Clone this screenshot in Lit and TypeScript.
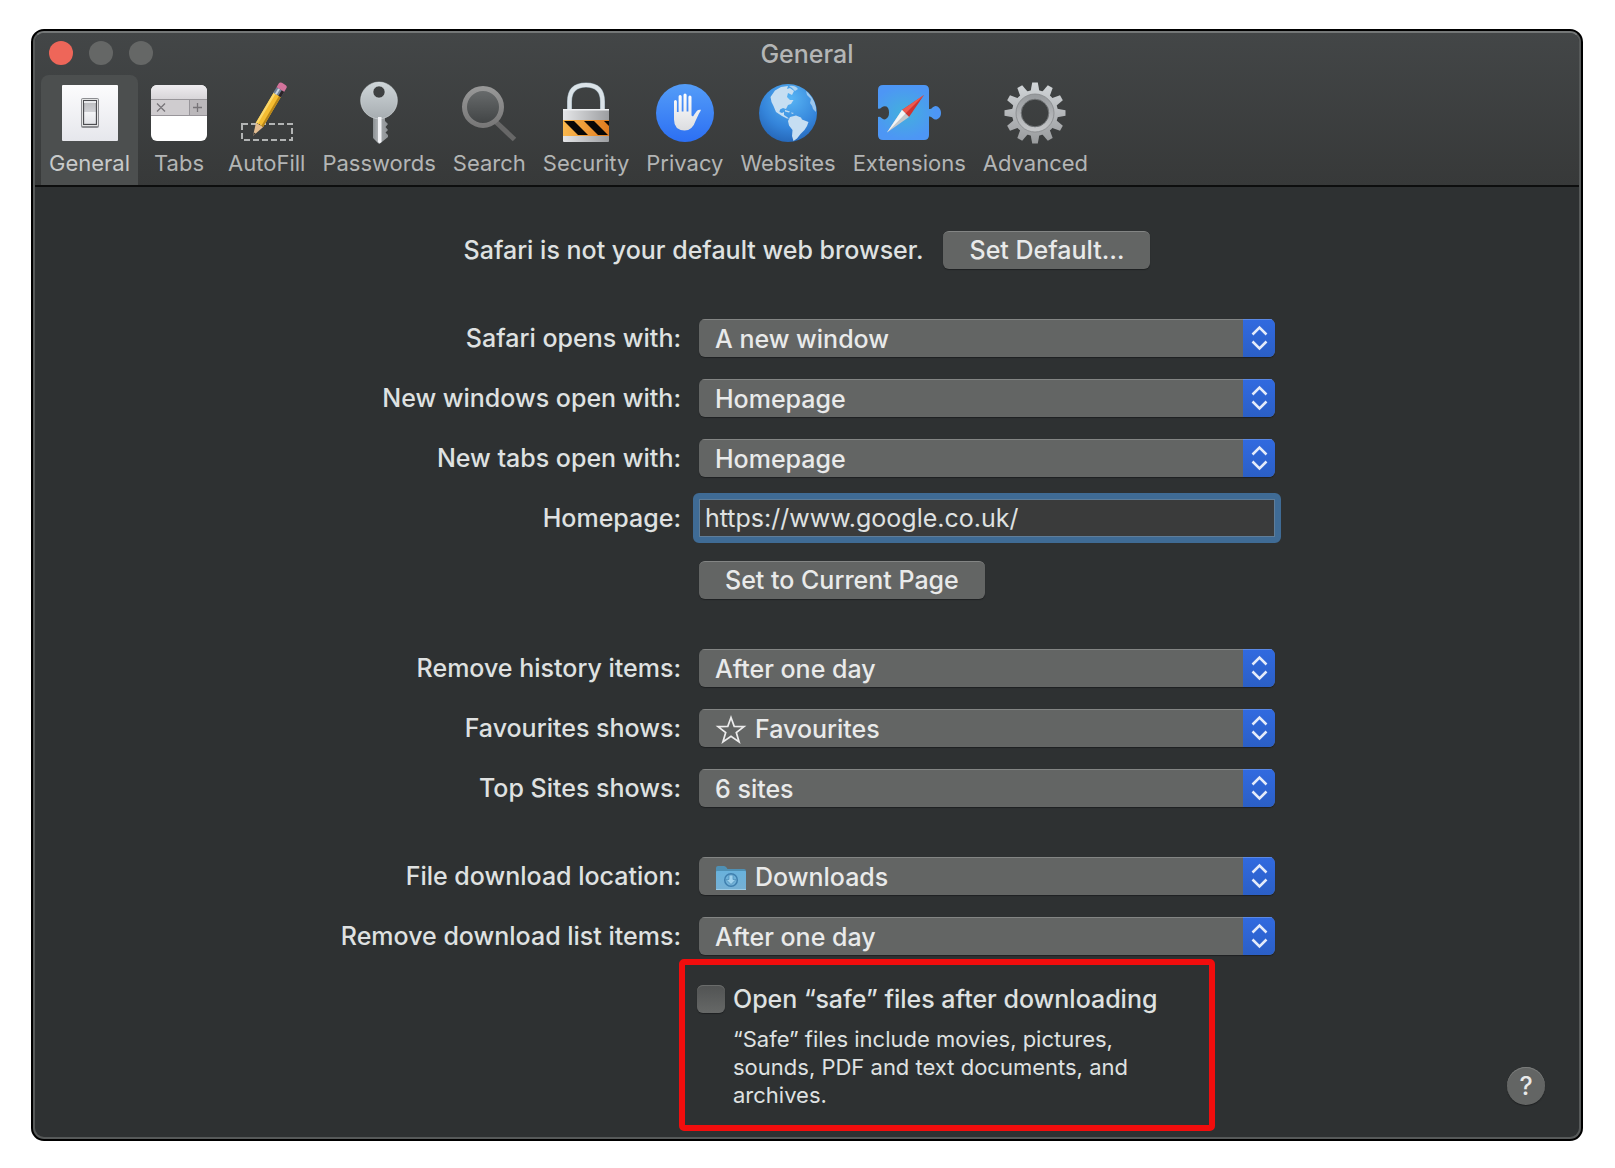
import { LitElement, html, svg, css, nothing } from "lit";
import { customElement, property, state } from "lit/decorators.js";
import { classMap } from "lit/directives/class-map.js";

const generalIcon = svg`
  <defs>
    <linearGradient id="plate" x1="0" y1="0" x2="0" y2="1"><stop offset="0" stop-color="#fcfcfd"/><stop offset="1" stop-color="#e6e7ec"/></linearGradient>
    <linearGradient id="rocker" x1="0" y1="0" x2="0" y2="1"><stop offset="0" stop-color="#b9babd"/><stop offset="0.46" stop-color="#cfd0d4"/><stop offset="0.5" stop-color="#f4f5f7"/><stop offset="1" stop-color="#e2e3e7"/></linearGradient>
  </defs>
  <rect x="4" y="4" width="56" height="56" rx="1" fill="url(#plate)"/>
  <rect x="23" y="17" width="18" height="30" rx="2" fill="#8d8e92"/>
  <rect x="24" y="18" width="16" height="27" rx="1" fill="#fff"/>
  <rect x="25.500" y="19.500" width="13" height="24" fill="url(#rocker)" stroke="#4c4d51" stroke-width="1.3"/>
  <rect x="26" y="20" width="12" height="2" fill="#e8e9ec"/>`;

const tabsIcon = svg`
  <defs>
    <linearGradient id="tabtop" x1="0" y1="0" x2="0" y2="1"><stop offset="0" stop-color="#eeecef"/><stop offset="1" stop-color="#d8d5d9"/></linearGradient>
    <clipPath id="tabclip"><rect x="4" y="4" width="56" height="56" rx="6"/></clipPath>
  </defs>
  <g clip-path="url(#tabclip)">
    <rect x="4" y="4" width="56" height="56" fill="#fff"/>
    <rect x="4" y="4" width="56" height="14" fill="url(#tabtop)"/>
    <rect x="4" y="18" width="56" height="17" fill="#cfcccf"/>
    <rect x="42" y="18" width="18" height="17" fill="#bbb8bb"/>
    <path d="M4 18.500H60M4 34.500H60M42.500 18V35" stroke="#98959a" fill="none"/>
    <path d="M10 22.500l8 8M18 22.500l-8 8M46 26.500h9M50.500 22v9" stroke="#777478" stroke-width="1.300" fill="none"/>
  </g>`;

const autofillIcon = svg`
  <rect x="7" y="43" width="50" height="16" fill="none" stroke="#b2b4b4" stroke-width="2" stroke-dasharray="6 3"/>
  <g transform="translate(18 55) rotate(30.500)">
    <path d="M0 0L-4.200-13H4.200Z" fill="#e3bd91"/>
    <path d="M0 0L-1-3.500H1Z" fill="#403c38"/>
    <path d="M-4.200-12.500V-48H4.200V-12.500Q3-15 1.500-12.500Q0-15-1.500-12.500Q-3-15-4.200-12.500Z" fill="#f5bd32"/>
    <path d="M-4.200-12.500V-48H-2V-13.500Z" fill="#fbd86b"/>
    <path d="M2-13.500V-48H4.200V-12.500Z" fill="#b98618"/>
    <rect x="-4.500" y="-54" width="9" height="6.500" fill="#6f7f96"/>
    <rect x="-2.500" y="-54" width="2" height="6.500" fill="#c7d3e0"/>
    <rect x="1.500" y="-54" width="3" height="6.500" fill="#2c2428"/>
    <path d="M-4.500-54V-58Q-4.500-60.500-2-60.500H2Q4.500-60.500 4.500-58V-54Z" fill="#d3739b"/>
  </g>`;

const passwordsIcon = svg`
  <defs>
    <linearGradient id="keyhead" x1="0" y1="0" x2="0" y2="1"><stop offset="0" stop-color="#cfd6d9"/><stop offset="1" stop-color="#a7adb1"/></linearGradient>
    <linearGradient id="keyblade" x1="0" y1="0" x2="1" y2="0"><stop offset="0" stop-color="#8b9093"/><stop offset="0.300" stop-color="#aaaeb1"/><stop offset="1" stop-color="#8d9194"/></linearGradient>
  </defs>
  <path d="M26 34H38V40L41 43L38.500 46L41 49L38.500 51.500L41 54V56L33 62.500H31.500L26 57Z" fill="url(#keyblade)"/>
  <path fill-rule="evenodd" d="M32 1A18.400 18.400 0 1 1 32 37.800A18.400 18.400 0 1 1 32 1ZM32 5A6 6 0 1 0 32 17A6 6 0 1 0 32 5Z" fill="url(#keyhead)" stroke="#dfe4e6" stroke-width="0.500"/>
  <path d="M31 36H34.500V61L32.500 62.500L31 61Z" fill="#f2f3f6"/>`;

const searchIcon = svg`
  <defs>
    <linearGradient id="lens" x1="0" y1="0" x2="0" y2="1"><stop offset="0" stop-color="#6a6d6e"/><stop offset="1" stop-color="#3f4243"/></linearGradient>
    <linearGradient id="rim" x1="0" y1="0" x2="0" y2="1"><stop offset="0" stop-color="#979797"/><stop offset="1" stop-color="#787878"/></linearGradient>
  </defs>
  <path d="M39 41L57.500 58.500" stroke="#676767" stroke-width="5" fill="none"/>
  <circle cx="26" cy="26" r="18.500" fill="url(#lens)" stroke="url(#rim)" stroke-width="5"/>`;

const securityIcon = svg`
  <defs>
    <linearGradient id="lockbody" x1="0" y1="0" x2="1" y2="0"><stop offset="0" stop-color="#e5e6e8"/><stop offset="1" stop-color="#9c9ea1"/></linearGradient>
    <linearGradient id="band" x1="0" y1="0" x2="1" y2="0"><stop offset="0" stop-color="#f9b84e"/><stop offset="1" stop-color="#e07c20"/></linearGradient>
    <clipPath id="bandclip"><rect x="9" y="40" width="46" height="14"/></clipPath>
  </defs>
  <path d="M15.500 30V20.500Q15.500 4 32 4Q48.500 4 48.500 20.500V30" fill="none" stroke="#8fa0aa" stroke-width="5"/>
  <path d="M15.500 30V20.500Q15.500 4 32 4Q48.500 4 48.500 20.500V30" fill="none" stroke="#dbe3e8" stroke-width="4"/>
  <rect x="9" y="28" width="46" height="33" rx="1" fill="url(#lockbody)"/>
  <rect x="9" y="28" width="46" height="1.500" fill="#eef0f2"/>
  <rect x="9" y="39" width="46" height="16" fill="url(#band)"/>
  <g clip-path="url(#bandclip)" fill="#080706">
    <path d="M9 39H19L35 55H25Z"/><path d="M29 39H39L55 55H45Z"/><path d="M49 39H55V45Z"/>
  </g>`;

const privacyIcon = svg`
  <defs>
    <linearGradient id="disc" x1="0" y1="0" x2="0" y2="1"><stop offset="0" stop-color="#549df8"/><stop offset="1" stop-color="#2c6ff3"/></linearGradient>
    <linearGradient id="palm" x1="0" y1="0" x2="0" y2="1"><stop offset="0" stop-color="#fff"/><stop offset="1" stop-color="#dcdde0"/></linearGradient>
  </defs>
  <circle cx="32" cy="32" r="29" fill="url(#disc)"/>
  <path d="M21 20.500Q21 19 22.400 19Q23.900 19 23.900 20.500V31H25.600V15.500Q25.600 14 27.100 14Q28.700 14 28.700 15.500V30.500H30.500V14Q30.500 12.500 32 12.500Q33.600 12.500 33.600 14V30.500H35.400V16Q35.400 14.500 36.900 14.500Q38.500 14.500 38.500 16V34.500L40 35.500Q42 32.500 44 29.800Q45.500 28.300 48 28.800Q47.500 30.500 46 32.500L42.500 40Q39.500 49.500 31.500 49.500Q21 49 21 38.500Z" fill="url(#palm)"/>`;

const websitesIcon = svg`
  <defs>
    <radialGradient id="sea" cx="0.550" cy="0.250" r="0.850"><stop offset="0" stop-color="#58b4f4"/><stop offset="0.600" stop-color="#3484da"/><stop offset="1" stop-color="#215eae"/></radialGradient>
    <clipPath id="globeclip"><circle cx="32" cy="32" r="29"/></clipPath>
  </defs>
  <circle cx="32" cy="32" r="29" fill="url(#sea)"/>
  <g clip-path="url(#globeclip)" fill="#c6def2">
    <path d="M14.500 16L19 9.500L25 6L32 5L31 8L34 7L38 10L36 14L32 12L31 16L34 19L37.500 19L35 23L32 24L30 28L27 27L24 28.500L23.500 31L26 32L28 31V34L31 36L33 37.500L31 37.500L26 35L20 31L17.500 25L15.500 21Z"/>
    <path d="M33 5Q39 4 42 8L39 10L36 7Z" opacity="0.800"/>
    <path d="M29 29L34 30.500L33 31.500L29 30.500ZM35 31.500L38 32L36 33Z"/>
    <path d="M34 36L40 34.500L45 36.500L46 38.500L52.500 41L51 45L48.500 49L44.500 53L41 57.500L37.500 60L36 55L36.500 49L33 44.500L32 40Z"/>
    <path d="M50 10Q54 13 58 20Q61 27 60 31L57 28Q56 24 54 22L55 18L51 14Z" opacity="0.700"/>
  </g>`;

const extensionsIcon = svg`
  <defs>
    <radialGradient id="puzzle" cx="0.420" cy="0.500" r="0.550"><stop offset="0" stop-color="#43b0dc"/><stop offset="0.900" stop-color="#4d96f5"/></radialGradient>
  </defs>
  <path d="M6 4H47Q52 4 52 9V28Q54 28.500 55.500 26.500Q58 24 60.500 25.500Q64 27.500 64 32Q64 36.500 60.500 38Q58 39.500 55.500 37Q54 35 52 35.500V54Q52 59 47 59H6Q1 59 1 54V36Q2.500 35 4.500 37Q7 39.500 9.500 37.500Q12 36 12 31.500Q12 27 9.500 25.500Q7 24.500 4.500 26.500Q2.500 28.500 1 27.500V9Q1 4 6 4Z" fill="url(#puzzle)"/>
  <path d="M47 14L25 29L32 36Z" fill="#cf3430"/>
  <path d="M47 14L25 29L28.500 32.500Z" fill="#ee5a50"/>
  <path d="M10 51.500L25 29L32 36Z" fill="#c5c8cb"/>
  <path d="M10 51.500L25 29L28.500 32.500Z" fill="#f4f5f6"/>`;

const teeth = Array.from({ length: 12 }, (_, i) => i * 30);
const advancedIcon = svg`
  <defs>
    <linearGradient id="gear" gradientUnits="userSpaceOnUse" x1="0" y1="-31" x2="0" y2="31"><stop offset="0" stop-color="#d3d7da"/><stop offset="1" stop-color="#989a9c"/></linearGradient>
    <linearGradient id="gearring" x1="0" y1="0" x2="0" y2="1"><stop offset="0" stop-color="#999c9f"/><stop offset="1" stop-color="#c3c5c7"/></linearGradient>
    <mask id="gearmask" maskUnits="userSpaceOnUse" x="-32" y="-32" width="64" height="64"><circle r="18.500" fill="none" stroke="#fff" stroke-width="9"/>
      ${teeth.map((a) => svg`<path transform="rotate(${a})" d="M-4.500-21L-2.800-30.500H2.800L4.500-21Z" fill="#fff"/>`)}
    </mask>
  </defs>
  <g transform="translate(32 32)">
    <rect x="-32" y="-32" width="64" height="64" fill="url(#gear)" mask="url(#gearmask)"/>
    <circle r="16.500" fill="none" stroke="url(#gearring)" stroke-width="5"/>
    <circle r="19" fill="none" stroke="#85888a" stroke-width="0.800"/>
    <circle r="13.800" fill="none" stroke="#737678" stroke-width="1"/>
  </g>`;

const starIcon = svg`<path d="M16 3.500L19.200 12.300L29 12.600L21.300 18.500L24.100 28L16 22.300L7.900 28L10.700 18.500L3 12.600L12.800 12.300Z" fill="none" stroke="#ececec" stroke-width="1.700" stroke-linejoin="miter"/>`;

const folderIcon = svg`
  <defs><linearGradient id="folder" x1="0" y1="0" x2="0" y2="1"><stop offset="0" stop-color="#69b2dc"/><stop offset="1" stop-color="#76b0d4"/></linearGradient></defs>
  <path d="M1 6Q1 4 3 4H9Q10.500 4 11.500 5.500L12.500 7H29Q31 7 31 9V12H1Z" fill="#4f90b4"/>
  <rect x="1" y="9" width="30" height="19" rx="1" fill="url(#folder)"/>
  <path d="M1 27.500H31" stroke="#9ccbe6" stroke-width="1"/>
  <circle cx="16" cy="18" r="6.300" fill="none" stroke="#3f7fae" stroke-width="1.500"/>
  <path d="M14 13H18V17.500H21L16 22.500L11 17.500H14Z" fill="#9fd2ee" stroke="#4a8cb8" stroke-width="0.700"/>`;

const TABS = [
  { name: "General", icon: generalIcon },
  { name: "Tabs", icon: tabsIcon },
  { name: "AutoFill", icon: autofillIcon },
  { name: "Passwords", icon: passwordsIcon },
  { name: "Search", icon: searchIcon },
  { name: "Security", icon: securityIcon },
  { name: "Privacy", icon: privacyIcon },
  { name: "Websites", icon: websitesIcon },
  { name: "Extensions", icon: extensionsIcon },
  { name: "Advanced", icon: advancedIcon },
];

@customElement("popup-row")
class PopupRow extends LitElement {
  @property() label = "";
  @property() value = "";
  @property({ attribute: false }) icon: unknown = null;

  static styles = css`
    :host { display: grid; grid-template-columns: subgrid; grid-column: 1 / -1; align-items: center; }
    label { text-align: right; white-space: nowrap; }
    .popup { display: grid; grid-template-columns: 48px 1fr 32px; height: 38px; border-radius: 6px;
      overflow: hidden; background: #636564; box-shadow: 0 1px 1px #1f2122; }
    select { grid-area: 1 / 1 / 2 / 4; width: 100%; min-width: 0; margin: 0; padding: 0 40px 2px 16px; border: 0;
      border-top: 1px solid #838584; appearance: none; background: transparent; color: #e9eaea; font: inherit; outline: none; }
    option { background: #3a3c3c; }
    select.with-icon { padding-left: 56px; }
    .icon { grid-area: 1 / 1; z-index: 1; width: 32px; height: 32px; justify-self: end; align-self: center; pointer-events: none; }
    .arrows { grid-area: 1 / 3; z-index: 1; width: 32px; height: 38px; pointer-events: none;
      background: linear-gradient(#316ae0, #2b5fc6); box-shadow: inset 0 1px #5b89e6; }
  `;

  render() {
    return html`
      <label for="field">${this.label}</label>
      <div class="popup">
        <select id="field" class=${classMap({ "with-icon": !!this.icon })}>
          <option>${this.value}</option>
        </select>
        ${this.icon ? html`<svg class="icon" viewBox="0 0 32 32" aria-hidden="true">${this.icon}</svg>` : nothing}
        <svg class="arrows" viewBox="0 0 32 38" aria-hidden="true">
          <path d="M9.500 15.500L16.500 8.500L23.500 15.500M9.500 22.500L16.500 29.500L23.500 22.500" fill="none" stroke="#e4ebfa" stroke-width="2.500"/>
        </svg>
      </div>`;
  }
}

@customElement("app-root")
class AppRoot extends LitElement {
  @state() private active = "General";

  static styles = css`
    * { box-sizing: border-box; }
    :host { display: block; padding: 29px 32px 25px 31px; background: #fff; color: #dfe1e1;
      font: 500 25px/38px Inter, "Liberation Sans", sans-serif; }
    button, input { font: inherit; }
    .window { border: 2px solid #000; border-radius: 13px; background: #000; }
    .frame { border: 2px solid #565959; border-top-color: #747777; border-radius: 11px; overflow: hidden; background: #2e3132; }
    header { background: linear-gradient(#434647, #373939); border-bottom: 2px solid #0d0e0e; }
    .titlebar { display: grid; grid-template-columns: 1fr auto 1fr; align-items: center; height: 42px; padding: 0 14px; }
    .lights { display: flex; gap: 16px; padding-bottom: 2px; }
    .light { width: 24px; height: 24px; padding: 0; border: 0; border-radius: 50%; background: #656766; }
    .close { background: #ee6659; }
    h1 { margin: 0; font-size: 25px; font-weight: 500; color: #b4b6b6; }
    .tabs { display: flex; gap: 1px; padding: 0 6px; }
    .tab { display: flex; flex-direction: column; align-items: center; gap: 4px; padding: 6px 8px 8px; border: 0;
      border-radius: 8px 8px 0 0; background: transparent; color: #b3b5b5; font-size: 22px; font-weight: 400; line-height: 28px; }
    .tab.active { background: #4c4f4f; color: #c8caca; }
    .tab svg { width: 64px; height: 64px; }
    .body { display: grid; }
    .content { grid-area: 1 / 1; padding: 44px 0 6px; }
    .default { display: flex; justify-content: center; align-items: center; gap: 20px; margin-bottom: 50px; }
    .default p { margin: 0; }
    .push { height: 38px; padding: 0 26px 2px; border: 0; border-top: 1px solid #838584; border-radius: 6px;
      background: #636564; box-shadow: 0 1px 1px #1f2122; color: #e9eaea; line-height: 34px; }
    .form { display: grid; grid-template-columns: 342px 576px; column-gap: 18px; row-gap: 50px; justify-content: center; }
    .group { display: grid; grid-template-columns: subgrid; grid-column: 1 / -1; row-gap: 22px; }
    .group label { text-align: right; }
    .url { height: 50px; min-width: 0; margin: -6px; padding: 0 6px; border: 6px solid #3f6b95; border-radius: 6px;
      background: #3a3b3b; box-shadow: inset 0 0 0 1px #5f7d99; color: #dfe1e1; font-weight: 400; outline: none; }
    .set { grid-column: 2; justify-self: start; margin-top: 2px; }
    .note { grid-column: 2; width: 536px; margin: -18px 0 0 -20px; padding: 20px 12px 16px; border: 6px solid #f20d0d; border-radius: 5px;
      display: grid; grid-template-columns: 28px 1fr; column-gap: 8px; row-gap: 12px; }
    .note input { appearance: none; width: 28px; height: 28px; margin: 0; border-radius: 6px;
      background: linear-gradient(#515353, #666867); box-shadow: 0 1px 1px #1f2122, inset 0 1px #6a6c6b; }
    .note label { line-height: 28px; text-align: left; white-space: nowrap; }
    .note p { grid-column: 2; width: 410px; margin: 0; font-size: 22px; font-weight: 400; line-height: 28px; }
    .help { grid-area: 1 / 1; align-self: end; justify-self: end; width: 38px; height: 38px; margin: 0 34px 32px; padding: 0;
      border: 0; border-radius: 50%; background: #636564; box-shadow: 0 1px 1px #1f2122, inset 0 1px #7b7d7c; color: #e9eaea; line-height: 38px; z-index: 1; }
  `;

  render() {
    return html`
      <main class="window">
        <div class="frame">
          <header>
            <div class="titlebar">
              <div class="lights">
                <button class="light close" aria-label="Close"></button>
                <button class="light" aria-label="Minimise"></button>
                <button class="light" aria-label="Zoom"></button>
              </div>
              <h1>${this.active}</h1>
            </div>
            <nav class="tabs">
              ${TABS.map((t) => html`
                <button class=${classMap({ tab: true, active: t.name === this.active })} @click=${() => (this.active = t.name)}>
                  <svg viewBox="0 0 64 64" aria-hidden="true">${t.icon}</svg>
                  <span>${t.name}</span>
                </button>`)}
            </nav>
          </header>
          <div class="body">
            <div class="content">
              <div class="default">
                <p>Safari is not your default web browser.</p>
                <button class="push">Set Default…</button>
              </div>
              <div class="form">
                <div class="group">
                  <popup-row label="Safari opens with:" value="A new window"></popup-row>
                  <popup-row label="New windows open with:" value="Homepage"></popup-row>
                  <popup-row label="New tabs open with:" value="Homepage"></popup-row>
                  <label for="homepage">Homepage:</label>
                  <input id="homepage" class="url" type="text" value="https://www.google.co.uk/" />
                  <button class="push set">Set to Current Page</button>
                </div>
                <div class="group">
                  <popup-row label="Remove history items:" value="After one day"></popup-row>
                  <popup-row label="Favourites shows:" value="Favourites" .icon=${starIcon}></popup-row>
                  <popup-row label="Top Sites shows:" value="6 sites"></popup-row>
                </div>
                <div class="group">
                  <popup-row label="File download location:" value="Downloads" .icon=${folderIcon}></popup-row>
                  <popup-row label="Remove download list items:" value="After one day"></popup-row>
                  <div class="note">
                    <input id="safe" type="checkbox" />
                    <label for="safe">Open “safe” files after downloading</label>
                    <p>“Safe” files include movies, pictures, sounds, PDF and text documents, and archives.</p>
                  </div>
                </div>
              </div>
            </div>
            <button class="help" aria-label="Help">?</button>
          </div>
        </div>
      </main>`;
  }
}
